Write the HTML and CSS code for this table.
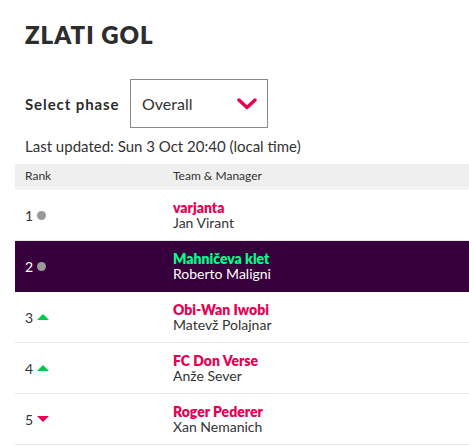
FILE: index.html
```html
<!DOCTYPE html>
<html lang="sl">
<head>
<meta charset="utf-8">
<title>Zlati gol</title>
<link rel="stylesheet" href="styles.css">
</head>
<body>
<div class="page">
  <h1 class="title">ZLATI GOL</h1>
  <div class="phase">
    <label class="phase-label">Select phase</label>
    <div class="select">
      <span class="select-value">Overall</span>
      <svg class="chevron" width="20" height="12" viewBox="0 0 20 12"><path d="M2 2 L10 9.5 L18 2" fill="none" stroke="#e90052" stroke-width="3.4" stroke-linecap="round" stroke-linejoin="round"/></svg>
    </div>
  </div>
  <p class="updated">Last updated: Sun 3 Oct 20:40 (local time)</p>
  <div class="table">
    <div class="row head">
      <div class="c-rank">Rank</div>
      <div class="c-team">Team &amp; Manager</div>
    </div>
    <div class="row">
      <div class="c-rank">1 <span class="mv same"></span></div>
      <div class="c-team"><div class="team">varjanta</div><div class="mgr">Jan Virant</div></div>
    </div>
    <div class="row mine">
      <div class="c-rank">2 <span class="mv same"></span></div>
      <div class="c-team"><div class="team">Mahničeva klet</div><div class="mgr">Roberto Maligni</div></div>
    </div>
    <div class="row">
      <div class="c-rank">3 <span class="mv up"></span></div>
      <div class="c-team"><div class="team">Obi-Wan Iwobi</div><div class="mgr">Matevž Polajnar</div></div>
    </div>
    <div class="row">
      <div class="c-rank">4 <span class="mv up"></span></div>
      <div class="c-team"><div class="team">FC Don Verse</div><div class="mgr">Anže Sever</div></div>
    </div>
    <div class="row">
      <div class="c-rank">5 <span class="mv down"></span></div>
      <div class="c-team"><div class="team">Roger Pederer</div><div class="mgr">Xan Nemanich</div></div>
    </div>
  </div>
</div>
</body>
</html>
```
FILE: styles.css
```css
html, body {
  margin: 0;
  padding: 0;
  background: #fff;
}
body {
  font-family: Lato, "Noto Sans", sans-serif;
  color: #333;
  overflow: hidden;
}
.page {
  padding: 21px 0 0 15px;
}
.title {
  margin: 0 0 0 10px;
  font-size: 24px;
  line-height: 28px;
  font-weight: 800;
  letter-spacing: 1px;
  color: #2d2d2d;
}
.phase {
  display: flex;
  align-items: center;
  margin: 30px 0 0 10px;
}
.phase-label {
  font-size: 15px;
  font-weight: 700;
  letter-spacing: 0.9px;
  color: #2d2d2d;
  width: 105px;
}
.select {
  box-sizing: border-box;
  width: 138px;
  height: 49px;
  border: 1px solid #8a8a8a;
  display: flex;
  align-items: center;
  justify-content: space-between;
  padding: 0 10px 0 11px;
}
.select-value {
  font-size: 16px;
  color: #333;
}
.chevron {
  display: block;
}
.updated {
  margin: 9px 0 0 10px;
  font-size: 15px;
  line-height: 19px;
  color: #333;
}
.table {
  margin-top: 8px;
}
.row {
  display: flex;
  align-items: center;
  height: 50px;
  border-bottom: 1px solid #e8e8e8;
}
.row.head {
  height: 22px;
  background: #efefef;
  border-bottom: 4px solid #f3f3f3;
  color: #333;
}
.c-rank {
  width: 148px;
  padding-left: 10px;
  font-size: 14px;
  display: flex;
  align-items: center;
  gap: 4px;
}
.head .c-rank, .head .c-team {
  font-size: 12px;
}
.c-team {
  font-size: 14px;
  line-height: 15px;
}
.team {
  font-weight: 800;
  color: #e90052;
}
.mgr {
  color: #333;
}
.mine {
  background: #37003c;
  color: #fff;
  border-bottom-color: #37003c;
}
.mine .team {
  color: #00ff87;
}
.mine .mgr {
  color: #fff;
}
.mv {
  display: inline-block;
}
.mv.same {
  width: 9px;
  height: 9px;
  border-radius: 50%;
  background: #999;
}
.mv.up {
  width: 0;
  height: 0;
  border-left: 6px solid transparent;
  border-right: 6px solid transparent;
  border-bottom: 6px solid #01c94c;
}
.mv.down {
  width: 0;
  height: 0;
  border-left: 6px solid transparent;
  border-right: 6px solid transparent;
  border-top: 6px solid #e90052;
}
```
